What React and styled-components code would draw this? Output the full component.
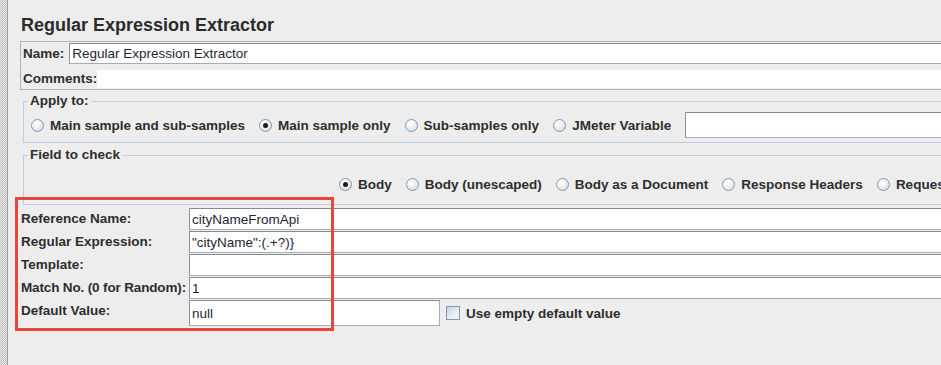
import React from 'react';
import styled, { createGlobalStyle } from 'styled-components';

const GlobalStyle = createGlobalStyle`
  html, body {
    margin: 0;
    padding: 0;
    background-color: #ededed;
    overflow: hidden;
  }
  body {
    font-family: "Liberation Sans", Arial, sans-serif;
    color: #2e2e2e;
  }
`;

const Frame = styled.div`
  display: flex;
  width: 941px;
  height: 365px;
  overflow: hidden;
  background-color: #ededed;
`;

const Splitter = styled.div`
  flex: none;
  width: 7px;
  border-right: 1px solid #9c9c9c;
  background-color: #ececec;
  background-image: repeating-conic-gradient(#bdbdbd 0 25%, #ececec 0 50%);
  background-size: 2px 2px;
`;

const Main = styled.div`
  position: relative;
  flex: none;
  width: 1000px;
  padding-left: 12px;
  box-sizing: border-box;
`;

const Title = styled.h1`
  margin: 14px 0 5px 1px;
  font-size: 18px;
  line-height: 22px;
  font-weight: 700;
  color: #2b2b2b;
`;

const NameBox = styled.div`
  border: 1px solid #b4b4b4;
  border-right: none;
  padding: 1px 0 0 2px;
`;

const NameRow = styled.div`
  display: flex;
  align-items: center;
  gap: ${(p) => p.$gap ?? 5}px;
  padding-top: ${(p) => p.$padTop || 0}px;
`;

const Label = styled.span`
  font-size: 13.5px;
  font-weight: 700;
  line-height: 21px;
  white-space: nowrap;
  color: #2e2e2e;
  letter-spacing: ${(p) => (p.$tight ? '-0.15px' : 'normal')};
`;

const TextInput = styled.div`
  box-sizing: border-box;
  flex: ${(p) => (p.$width ? 'none' : '1')};
  width: ${(p) => (p.$width ? `${p.$width}px` : 'auto')};
  height: ${(p) => p.$height || 21}px;
  display: flex;
  align-items: center;
  padding-left: 2px;
  background: #ffffff;
  border: 1px solid #a3adb8;
  border-top-color: #7f8b97;
  border-left-color: #8a96a2;
  font-size: 13.5px;
  color: #1f1f38;
  white-space: nowrap;
`;

const CommentArea = styled.div`
  flex: 1;
  height: 18px;
  background: #ffffff;
`;

const Group = styled.fieldset`
  margin: ${(p) => p.$top}px 0 0 3px;
  padding: 0;
  min-width: 0;
  border: 1px solid #bccfe2;
  border-right: none;
`;

const Legend = styled.legend`
  margin-left: 4px;
  padding: 0 2px;
  font-size: 13.5px;
  font-weight: 700;
  line-height: 16px;
  color: #2e2e2e;
`;

const OptionRow = styled.div`
  display: flex;
  align-items: center;
  gap: 14px;
  padding: ${(p) => p.$pad};
`;

const Option = styled.label`
  display: flex;
  align-items: center;
  gap: 6px;
  font-size: 13.5px;
  font-weight: 700;
  white-space: nowrap;
  color: #2e2e2e;
`;

const RadioDot = styled.span`
  position: relative;
  flex: none;
  width: 13px;
  height: 13px;
  box-sizing: border-box;
  border-radius: 50%;
  border: 1px solid #8797a8;
  background: radial-gradient(circle at 35% 30%, #ffffff 0, #f2f5f8 35%, #c9d4df 100%);

  &::after {
    content: '';
    display: ${(p) => (p.$checked ? 'block' : 'none')};
    position: absolute;
    left: 3px;
    top: 3px;
    width: 5px;
    height: 5px;
    border-radius: 50%;
    background: #1c1c1c;
  }
`;

const CheckBox = styled.span`
  flex: none;
  width: 14px;
  height: 14px;
  box-sizing: border-box;
  border: 1px solid #8797a8;
  background: linear-gradient(135deg, #c8d4e1 0%, #e6ecf2 55%, #f7f9fb 100%);
`;

const FormGrid = styled.div`
  display: grid;
  grid-template-columns: 168px 1fr;
  grid-auto-rows: 22px;
  row-gap: 1px;
  margin-top: 3px;
  padding-left: 1px;
`;

const FormLabel = styled(Label)`
  align-self: start;
`;

const InlineField = styled.div`
  display: flex;
  align-items: center;
  gap: 6px;
  height: 26px;
`;

const Highlight = styled.div`
  position: absolute;
  left: 7px;
  top: 197px;
  width: 319px;
  height: 134px;
  box-sizing: border-box;
  border: 3px solid #e8463d;
  pointer-events: none;
`;

const Radio = ({ label, checked }) => (
  <Option>
    <RadioDot $checked={checked} />
    {label}
  </Option>
);

const fields = [
  { label: 'Reference Name:', value: 'cityNameFromApi' },
  { label: 'Regular Expression:', value: '"cityName":(.+?)}' },
  { label: 'Template:', value: '' },
  { label: 'Match No. (0 for Random):', value: '1', tight: true },
];

const App = () => {
  return (
    <Frame>
      <GlobalStyle />
      <Splitter />
      <Main>
        <Title>Regular Expression Extractor</Title>

        <NameBox>
          <NameRow>
            <Label>Name:</Label>
            <TextInput>Regular Expression Extractor</TextInput>
          </NameRow>
          <NameRow $padTop={4} $gap={0}>
            <Label>Comments:</Label>
            <CommentArea />
          </NameRow>
        </NameBox>

        <Group $top={3}>
          <Legend>Apply to:</Legend>
          <OptionRow $pad="3px 0 4px 7px">
            <Radio label="Main sample and sub-samples" />
            <Radio label="Main sample only" checked />
            <Radio label="Sub-samples only" />
            <Radio label="JMeter Variable" />
            <TextInput $height={26} />
          </OptionRow>
        </Group>

        <Group $top={4}>
          <Legend>Field to check</Legend>
          <OptionRow $pad="14px 0 12px 315px">
            <Radio label="Body" checked />
            <Radio label="Body (unescaped)" />
            <Radio label="Body as a Document" />
            <Radio label="Response Headers" />
            <Radio label="Request Headers" />
          </OptionRow>
        </Group>

        <FormGrid>
          {fields.map((f) => (
            <React.Fragment key={f.label}>
              <FormLabel $tight={f.tight}>{f.label}</FormLabel>
              <TextInput $height={22}>{f.value}</TextInput>
            </React.Fragment>
          ))}
          <FormLabel>Default Value:</FormLabel>
          <InlineField>
            <TextInput $width={251} $height={26}>null</TextInput>
            <Option>
              <CheckBox />
              Use empty default value
            </Option>
          </InlineField>
        </FormGrid>

        <Highlight />
      </Main>
    </Frame>
  );
};

export default App;
